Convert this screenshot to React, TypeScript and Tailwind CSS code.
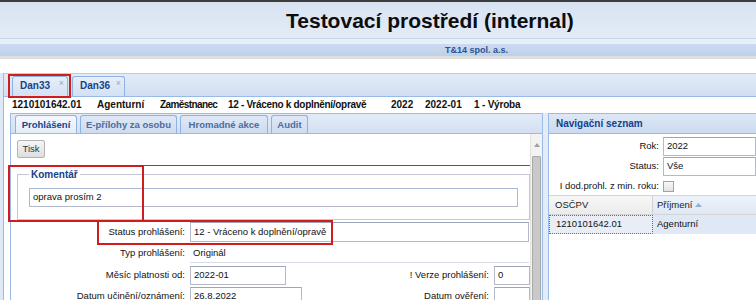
import React from "react";

function Tab({ label, w }: { label: string; w: string }) {
  return (
    <div
      className={`${w} shrink-0 h-[20px] rounded-t-[3px] border border-b-0 border-[#8db2e3] bg-gradient-to-b from-[#e6eef9] to-[#d3e1f3] flex items-start pl-[7px] pr-[3px] pt-[4px]`}
    >
      <span className="text-[10px] font-bold text-[#15428b] leading-none flex-1">{label}</span>
      <span className="text-[9px] leading-none text-[#9aa6b8] -mt-[2px]">×</span>
    </div>
  );
}

function InnerTab({ label, w, active }: { label: string; w: string; active?: boolean }) {
  return (
    <div
      className={`${w} shrink-0 h-[18px] rounded-t-[3px] border border-b-0 border-[#8db2e3] flex items-center justify-center ${
        active ? "bg-gradient-to-b from-[#f4f8fd] to-[#e4edf8] text-[#15428b]" : "bg-gradient-to-b from-[#dfe8f6] to-[#cddcf0] text-[#4d6c9c]"
      }`}
    >
      <span className="text-[9.5px] font-bold leading-none">{label}</span>
    </div>
  );
}

function Input({ value, w, h = "h-[19px]" }: { value: string; w: string; h?: string }) {
  return (
    <div className={`${w} ${h} border border-[#b5b8c8] border-t-[#9da4b8] bg-white flex items-center pl-[3px] overflow-hidden whitespace-nowrap`}>
      {value}
    </div>
  );
}

export default function App() {
  return (
    <div className="w-[756px] h-[300px] overflow-hidden relative bg-white font-['Liberation_Sans',Arial,sans-serif] text-[9.5px] text-[#111]">
      <div className="h-[2px] bg-[#3c3c3c]" />
      <div className="h-[36px] bg-gradient-to-b from-[#d8e3f2] to-[#e3ebf6] flex items-center pl-[286px]">
        <span className="text-[21px] font-bold leading-none text-[#0d0d0d]">Testovací prostředí (internal)</span>
      </div>
      <div className="h-[6px] bg-[#e9eff8] border-t border-[#c6d5ea]" />
      <div className="h-[12px] bg-gradient-to-b from-[#cbdaef] to-[#bed1eb] flex items-center pl-[445px]">
        <span className="text-[9px] font-bold text-[#2a5294] leading-none">T&amp;14 spol. a.s.</span>
      </div>
      <div className="h-[3px] bg-[#dedede]" />
      <div className="h-[14px] bg-white" />

      <div className="flex h-[227px]">
        <div className="w-[3px] shrink-0 bg-[#dfe8f6]" />
        <div className="flex-1 border-l border-[#99bbe8] flex flex-col min-w-0 *:shrink-0">
          <div className="h-[24px] border-t border-[#b8cde9] border-b border-b-[#99bbe8] bg-gradient-to-b from-[#e3ebf7] to-[#d2dff1] flex items-end pl-[8px] gap-[4px]">
            <Tab label="Dan33" w="w-[56px]" />
            <Tab label="Dan36" w="w-[53px]" />
          </div>
          <div className="flex-1 bg-white flex flex-col min-h-0 *:shrink-0">
            <div className="h-[15px] flex items-center pl-[8px] text-[10px] font-bold leading-none whitespace-nowrap *:shrink-0">
              <span className="w-[85px]">1210101642.01</span>
              <span className="w-[63px]">Agenturní</span>
              <span className="w-[68px] tracking-[-0.6px]">Zaměstnanec</span>
              <span className="w-[163px] tracking-[-0.3px]">12 - Vráceno k doplnění/opravě</span>
              <span className="w-[34px]">2022</span>
              <span className="w-[49px]">2022-01</span>
              <span className="tracking-[-0.2px]">1 - Výroba</span>
            </div>
            <div className="h-[196px] flex pt-[1px] pl-[6px]">
              {/* left panel */}
              <div className="w-[533px] shrink-0 border border-[#99bbe8] border-b-0 flex flex-col *:shrink-0">
                <div className="h-[20px] bg-gradient-to-b from-[#e3ebf7] to-[#d3e0f2] border-b border-[#99bbe8] flex items-end pl-[4px] gap-[3px]">
                  <InnerTab label="Prohlášení" w="w-[62px]" active />
                  <InnerTab label="E-přílohy za osobu" w="w-[97px]" />
                  <InnerTab label="Hromadné akce" w="w-[88px]" />
                  <InnerTab label="Audit" w="w-[37px]" />
                </div>
                <div className="h-[175px] flex">
                  <div className="w-[519px] shrink-0 flex flex-col *:shrink-0 overflow-hidden">
                    <div className="h-[31px] pl-[6px] pt-[6px]">
                      <div className="w-[28px] h-[18px] rounded-[2px] border border-[#b3b3b3] bg-gradient-to-b from-[#f6f6f6] to-[#dedede] flex items-center justify-center text-[#333]">
                        Tisk
                      </div>
                    </div>
                    <div className="h-px bg-[#2f52e0]" />
                    <fieldset className="ml-[6px] mt-[3px] border border-[#c4c7d4] px-[11px] pb-[12px]">
                      <legend className="px-[2px] text-[10px] font-bold text-[#15428b] leading-[11px]">Komentář</legend>
                      <div className="mt-[8px] h-[19px] border border-[#b5b8c8] border-t-[#a8b8d8] bg-white flex items-center pl-[3px]">
                        oprava prosím 2
                      </div>
                    </fieldset>
                    <div className="mt-[2px] flex items-center h-[20px]">
                      <div className="w-[174px] text-right">Status prohlášení:</div>
                      <div className="ml-[5px] flex-1 mr-[1px]">
                        <Input value="12 - Vráceno k doplnění/opravě" w="w-full" h="h-[20px]" />
                      </div>
                    </div>
                    <div className="mt-[2px] flex items-center h-[19px]">
                      <div className="w-[174px] text-right">Typ prohlášení:</div>
                      <div className="ml-[5px] flex-1 mr-[1px] h-[19px] flex items-center pl-[3px] border-b border-[#d8dbe4]">Originál</div>
                    </div>
                    <div className="mt-[3px] flex items-center h-[19px]">
                      <div className="w-[174px] text-right">Měsíc platnosti od:</div>
                      <div className="ml-[5px]">
                        <Input value="2022-01" w="w-[96px]" />
                      </div>
                      <div className="ml-auto flex items-center">
                        <span className="text-right">! Verze prohlášení:</span>
                        <div className="ml-[5px]">
                          <Input value="0" w="w-[36px]" />
                        </div>
                      </div>
                    </div>
                    <div className="mt-[2px] flex items-center h-[19px]">
                      <div className="w-[174px] text-right">Datum učinění/oznámení:</div>
                      <div className="ml-[5px]">
                        <Input value="26.8.2022" w="w-[112px]" />
                      </div>
                      <div className="ml-auto flex items-center">
                        <span className="text-right">Datum ověření:</span>
                        <div className="ml-[5px]">
                          <Input value="" w="w-[36px]" />
                        </div>
                      </div>
                    </div>
                  </div>
                  {/* scrollbar */}
                  <div className="w-[12px] shrink-0 bg-[#f3f3f3] border-l border-[#e2e2e2] flex flex-col">
                    <div className="h-[22px] shrink-0 flex items-center justify-center">
                      <svg width="6" height="4" viewBox="0 0 6 4">
                        <path d="M0 4 L3 0 L6 4 Z" fill="#a0a0a0" />
                      </svg>
                    </div>
                    <div className="flex-1 mx-[1px] bg-[#c9c9c9] border border-[#a9a9a9] rounded-t-[1px]" />
                  </div>
                </div>
              </div>
              {/* splitter */}
              <div className="w-[5px] shrink-0 bg-[#e4ecf7]" />
              {/* right panel */}
              <div className="flex-1 min-w-0 border-l border-t border-[#99bbe8] flex flex-col bg-white *:shrink-0">
                <div className="h-[20px] bg-gradient-to-b from-[#dde8f6] to-[#cbdaef] border-b border-[#99bbe8] flex items-center pl-[7px]">
                  <span className="text-[10px] font-bold text-[#15428b] leading-none">Navigační seznam</span>
                </div>
                <div className="mt-[3px] flex items-center h-[19px]">
                  <div className="w-[110px] text-right">Rok:</div>
                  <div className="ml-[4px] flex-1">
                    <Input value="2022" w="w-full" />
                  </div>
                </div>
                <div className="mt-[1px] flex items-center h-[19px]">
                  <div className="w-[110px] text-right">Status:</div>
                  <div className="ml-[4px] flex-1">
                    <Input value="Vše" w="w-full" />
                  </div>
                </div>
                <div className="mt-[3px] flex items-center h-[14px]">
                  <div className="w-[110px] text-right whitespace-nowrap">I dod.prohl. z min. roku:</div>
                  <div className="ml-[4px] w-[11px] h-[11px] border border-[#9aa3b5] bg-gradient-to-b from-[#f8f8f8] to-[#e2e2e2]" />
                </div>
                <div className="mt-[2px] h-[20px] flex border-t border-b border-[#d4d4d4] bg-gradient-to-b from-[#f7f7f7] to-[#ececec]">
                  <div className="w-[104px] border-r border-[#d0d0d0] flex items-center pl-[6px] text-[#222]">OSČPV</div>
                  <div className="flex-1 flex items-center pl-[4px] bg-gradient-to-b from-[#eef3fa] to-[#dfe8f4] text-[#222]">
                    Příjmení
                    <svg className="ml-[3px]" width="7" height="4" viewBox="0 0 7 4">
                      <path d="M0 4 L3.5 0 L7 4 Z" fill="#8fb0dc" />
                    </svg>
                  </div>
                </div>
                <div className="h-[19px] flex bg-[#dfe8f6]">
                  <div className="w-[104px] pl-[6px] flex items-center border border-dotted border-[#6d6d6d] bg-[#e9eef6]">1210101642.01</div>
                  <div className="flex-1 flex items-center pl-[4px]">Agenturní</div>
                </div>
              </div>
            </div>
          </div>
        </div>
      </div>

      {/* red annotation boxes */}
      <div className="absolute left-[8px] top-[74px] w-[63px] h-[24px] border-2 border-[#d01c1c]" />
      <div className="absolute left-[8px] top-[165px] w-[136px] h-[57px] border-2 border-[#d01c1c]" />
      <div className="absolute left-[97px] top-[220px] w-[236px] h-[25px] border-2 border-[#d01c1c]" />
    </div>
  );
}
